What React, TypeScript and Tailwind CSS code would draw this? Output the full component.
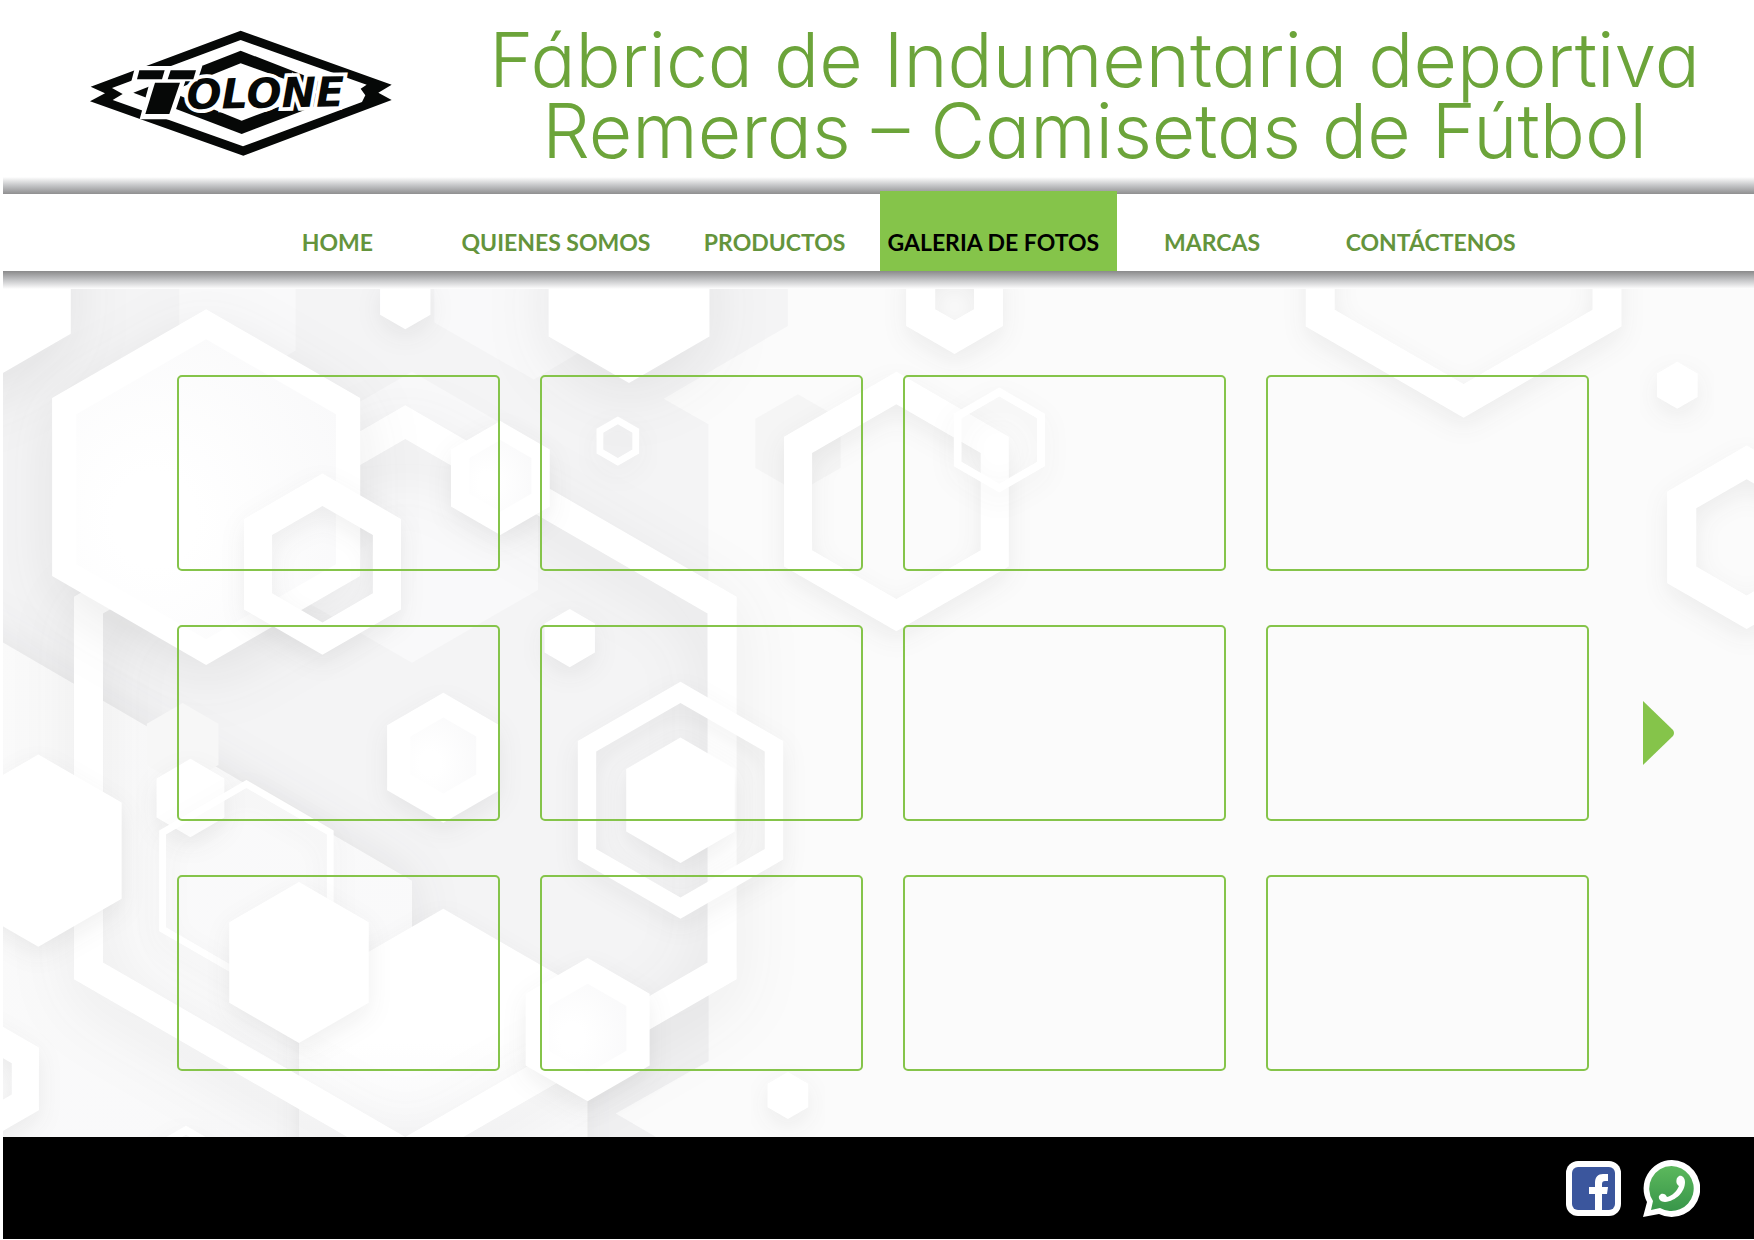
import React from "react";

const NAV = [
  { label: "HOME", active: false },
  { label: "QUIENES SOMOS", active: false },
  { label: "PRODUCTOS", active: false },
  { label: "GALERIA DE FOTOS", active: true },
  { label: "MARCAS", active: false },
  { label: "CONTÁCTENOS", active: false },
];

function hexPath(cx: number, cy: number, r: number) {
  const w = r * 0.866;
  const h = r / 2;
  return `M${cx} ${cy - r}L${cx + w} ${cy - h}V${cy + h}L${cx} ${cy + r}L${cx - w} ${cy + h}V${cy - h}Z`;
}

type HexProps = { x: number; y: number; r: number; inner?: number; fill?: string; flat?: boolean };

function Hex({ x, y, r, inner, fill = "#fff", flat = false }: HexProps) {
  const d = hexPath(x, y, r) + (inner ? hexPath(x, y, inner) : "");
  return <path d={d} fill={fill} fillRule="evenodd" filter={flat ? undefined : "url(#soft)"} />;
}

function Backdrop() {
  return (
    <svg
      aria-hidden="true"
      className="absolute inset-0 h-full w-full"
      viewBox="2 258 1566 758"
      preserveAspectRatio="xMidYMid slice"
    >
      <defs>
        <filter id="soft" x="-40%" y="-40%" width="180%" height="190%" colorInterpolationFilters="sRGB">
          <feDropShadow dx="0" dy="8" stdDeviation="11" floodColor="#2a2a2e" floodOpacity="0.07" />
        </filter>
        <filter id="wide" x="-40%" y="-40%" width="180%" height="180%" colorInterpolationFilters="sRGB">
          <feDropShadow dx="0" dy="14" stdDeviation="28" floodColor="#2a2a2e" floodOpacity="0.09" />
        </filter>
        <filter id="around" x="-40%" y="-40%" width="180%" height="180%" colorInterpolationFilters="sRGB">
          <feDropShadow dx="0" dy="0" stdDeviation="22" floodColor="#2a2a3a" floodOpacity="0.09" />
        </filter>
        <radialGradient id="core" cx="0.3" cy="0.6" r="0.8">
          <stop offset="0.2" stopColor="#ffffff" />
          <stop offset="1" stopColor="#f9f9fa" />
        </radialGradient>
        <linearGradient id="slab" x1="0" y1="0" x2="1" y2="1">
          <stop offset="0" stopColor="#fafafa" />
          <stop offset="1" stopColor="#f9f9fa" />
        </linearGradient>
        <linearGradient id="floor" x1="0" y1="0" x2="0" y2="1">
          <stop offset="0.4" stopColor="#ffffff" />
          <stop offset="0.7" stopColor="#f9f9fa" />
        </linearGradient>
      </defs>
      <rect x="2" y="200" width="1570" height="900" fill="#fbfbfb" />
      <path d="M2 200H704V291L593 356L633 379V948L550 995L640 1047H2Z" fill="#f4f4f5" />
      <path d="M160 200H264V313L212 343L160 313Z" fill="#f9f9fa" />
      <path d="M388 200H549V296L477 339L388 288Z" fill="#f9f9fa" />
      <path d="M-80 526L368 787V1160H-80Z" fill="url(#slab)" filter="url(#around)" />

      <path d="M-60 200H63V298L-39 357Z" fill="#fff" filter="url(#wide)" />
      <Hex x={362} y={268} r={26} />
      <path d={hexPath(562, 259, 83)} fill="#fff" filter="url(#wide)" />
      <Hex x={853} y={266} r={50} inner={20} />
      <Hex x={713} y={396} r={44} fill="#f5f5f5" flat />
      <Hex x={801} y={448} r={116} inner={87} />
      <Hex x={893} y={393} r={47} inner={39} />
      <Hex x={1308} y={210} r={163} inner={133} />
      <Hex x={1499} y={344} r={21} />
      <Hex x={1561} y={480} r={82} inner={52} />

      <Hex x={368} y={462} r={130} fill="#f9f9fa" flat />
      <path d={hexPath(396, 961, 149)} fill="url(#floor)" filter="url(#soft)" />
      <path d="M525 900V1060H660L550 995L633 948V880Z" fill="#ececee" opacity="0.5" />
      <path
        d={hexPath(362, 704, 342) + hexPath(362, 704, 312)}
        fill="#fff"
        fillRule="evenodd"
        filter="url(#wide)"
      />
      <path d={hexPath(184, 435, 159)} fill="#fff" filter="url(#wide)" />
      <path d={hexPath(184, 437, 134)} fill="url(#core)" />
      <Hex x={288} y={504} r={81} inner={52} />
      <Hex x={447} y={427} r={51} />
      <path d={hexPath(447, 425, 32)} fill="url(#core)" />
      <Hex x={552} y={394} r={22} inner={15} />
      <Hex x={509} y={570} r={26} />
      <Hex x={396} y={677} r={58} />
      <path d={hexPath(396, 675, 34)} fill="url(#core)" />
      <Hex x={608} y={715} r={106} inner={87} />
      <Hex x={608} y={715} r={56} />
      <Hex x={163} y={665} r={37} fill="#f7f7f7" flat />
      <Hex x={170} y={713} r={35} />
      <Hex x={220} y={787} r={90} inner={83} />
      <Hex x={34} y={760} r={86} />
      <Hex x={267} y={860} r={72} />
      <Hex x={525} y={920} r={64} />
      <path d={hexPath(525, 919, 40)} fill="url(#core)" />
      <Hex x={704} y={979} r={21} />
      <Hex x={-14} y={964} r={56} inner={28} />
      <Hex x={166} y={1036} r={30} inner={22} />
    </svg>
  );
}

function Logo() {
  return (
    <svg viewBox="60 60 906 378" role="img" aria-label="Tolone" className="w-[302px] shrink-0">
      <path d="M62 230L512 62L965 224L925 248L965 270L520 437L60 274L105 250Z" fill="#060807" />
      <path d="M126 234L512 90L890 224L872 236L886 256L876 276L519 409L128 270L158 252Z" fill="#fff" />
      <path d="M190 248L512 122L815 240V258L515 372Z" fill="#060807" />
      <path d="M300 245L512 160L750 245L515 332Z" fill="#fff" />
      <text
        x="350"
        y="297"
        transform="rotate(-1 350 297)"
        fill="#060807"
        stroke="#fff"
        strokeWidth="22"
        paintOrder="stroke"
        className="font-['DejaVu_Sans',sans-serif] text-[124px] font-bold italic"
      >
        OLONE
      </text>
      <path d="M196 168H397L382 214H346L308 328H209L240 214H184Z" fill="#fff" />
      <path d="M208 181H284L276 208H201Z" fill="#060807" />
      <path d="M302 181H378L370 208H293Z" fill="#060807" />
      <path d="M255 218H330L298 312H226Z" fill="#060807" />
    </svg>
  );
}

function FacebookIcon() {
  return (
    <svg viewBox="0 0 55 55" className="size-[55px]" aria-hidden="true">
      <rect width="55" height="55" rx="12" fill="#fff" />
      <rect x="6" y="6" width="43" height="43" rx="6" fill="#3b569d" />
      <path
        d="M29 49V33H23V26H29V22C29 16 32 13 37 13H42V20H39C37 20 36 21 36 23V26H42L41 33H36V49Z"
        fill="#fff"
      />
    </svg>
  );
}

function WhatsAppIcon() {
  return (
    <svg viewBox="0 0 57 57" className="size-[57px]" aria-hidden="true">
      <defs>
        <linearGradient id="wa" x1="0" y1="0" x2="0" y2="1">
          <stop offset="0" stopColor="#5cb85c" />
          <stop offset="1" stopColor="#38964a" />
        </linearGradient>
      </defs>
      <path d="M28.500 0A28.500 28.500 0 1 1 16 54L0 57L4 42A28.500 28.500 0 0 1 28.500 0Z" fill="#fff" />
      <path d="M28.500 6A22.500 22.500 0 1 1 17 48L8 50L10 41A22.500 22.500 0 0 1 28.500 6Z" fill="url(#wa)" />
      <path
        d="M36 16C39 15 42 18 42 22C42 32 33 41 22 42C18 42 15 39 16 36L18 34C20 33 23 34 24 37C29 36 34 31 36 26C33 24 33 21 34 18Z"
        fill="#fff"
      />
    </svg>
  );
}

export default function App() {
  return (
    <div className="min-h-screen bg-white pl-[3px] font-[Lato,sans-serif]">
      <header className="flex h-[177px] items-start justify-between pt-6 pr-[54px] pl-[87px]">
        <a href="#inicio" className="mt-1.5">
          <Logo />
        </a>
        <h1 className="text-center font-[Inter,sans-serif] text-[75px] leading-[71px] font-light whitespace-nowrap text-[#6ca43a] [font-feature-settings:'cv11']">
          Fábrica de Indumentaria deportiva
          <br />
          Remeras – Camisetas de Fútbol
        </h1>
      </header>

      <div className="h-[17px] bg-linear-to-t from-[#8f8f90] via-[#c4c5c7] to-white" />
      <nav aria-label="Principal" className="relative z-10 h-[77px] bg-white pr-[214px] pl-[225px]">
        <ul className="grid h-full grid-cols-6">
          {NAV.map((item) => (
            <li key={item.label} className="flex">
              <a
                href="#"
                aria-current={item.active ? "page" : undefined}
                className={
                  item.active
                    ? "-mt-[3px] -mr-[14px] -ml-1 flex flex-1 items-end justify-center bg-[#85c44a] pr-[10px] pb-[15px] text-[23px] leading-7 font-bold whitespace-nowrap text-black"
                    : "flex flex-1 items-end justify-center pb-[15px] text-[23px] leading-7 font-bold whitespace-nowrap text-[#64943c]"
                }
              >
                {item.label}
              </a>
            </li>
          ))}
        </ul>
      </nav>
      <div className="h-[18px] bg-linear-to-b from-[#8a8a8b] via-[#c4c5c7] to-white" />

      <main className="relative overflow-hidden">
        <Backdrop />
        <div className="relative flex items-center pt-[86px] pr-[79px] pb-[66px] pl-[174px]">
          <ul aria-label="Galería de fotos" className="grid flex-1 grid-cols-4 gap-x-10 gap-y-[54px]">
            {Array.from({ length: 12 }, (_, i) => (
              <li key={i} className="h-[196px] rounded-[5px] border-2 border-[#85c44a]" />
            ))}
          </ul>
          <button type="button" aria-label="Siguiente" className="mt-5 ml-[54px]">
            <svg viewBox="0 0 32 64" className="h-16 w-8" aria-hidden="true">
              <path d="M0 0L30 29Q32 32 30 35L0 64Z" fill="#85c44a" />
            </svg>
          </button>
        </div>
      </main>

      <footer className="flex h-[102px] items-center justify-end gap-[22px] bg-black pr-[54px]">
        <a href="#facebook" aria-label="Facebook">
          <FacebookIcon />
        </a>
        <a href="#whatsapp" aria-label="WhatsApp">
          <WhatsAppIcon />
        </a>
      </footer>
    </div>
  );
}
